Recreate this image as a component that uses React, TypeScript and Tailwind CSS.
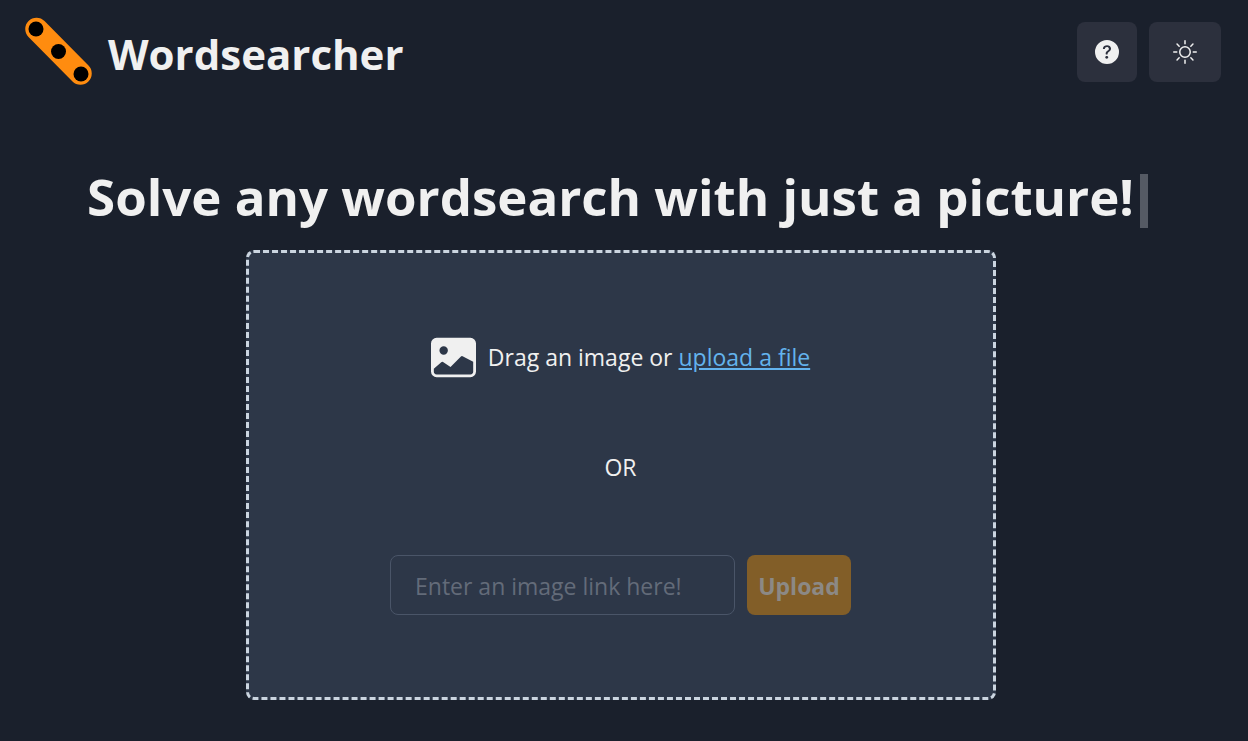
import { BsFillQuestionCircleFill, BsImageFill, BsSun } from "react-icons/bs";

function Logo() {
  return (
    <svg className="size-[72px] shrink-0" viewBox="0 0 72 72" aria-hidden="true">
      <line x1="12.5" y1="13" x2="56.5" y2="57.5" stroke="#ff8c0f" strokeWidth="22.5" strokeLinecap="round" />
      <circle cx="12" cy="13" r="7.5" />
      <circle cx="34.5" cy="35.5" r="7.5" />
      <circle cx="57" cy="58" r="7.5" />
    </svg>
  );
}

export default function App() {
  return (
    <div className="min-h-screen bg-[#1a202c] pr-[27px] pl-6 font-['Open_Sans','Noto_Sans',sans-serif] text-[#f0f0f0]">
      <header className="flex items-start justify-between pt-4">
        <div className="flex items-start gap-3">
          <Logo />
          <span className="text-[42px] leading-[76px] font-bold">Wordsearcher</span>
        </div>
        <div className="flex gap-3 pt-1.5">
          <button type="button" aria-label="Help" className="flex h-[60px] w-[60px] items-center justify-center rounded-lg bg-[#2c303d]">
            <BsFillQuestionCircleFill className="size-6" />
          </button>
          <button type="button" aria-label="Light mode" className="flex h-[60px] w-[72px] items-center justify-center rounded-lg bg-[#2c303d]">
            <BsSun className="size-6" />
          </button>
        </div>
      </header>
      <main className="flex flex-col items-center pt-[68px] pr-1 pb-10">
        <h1 className="flex items-end gap-1.5 pr-1.5 text-[51px] leading-[72px] font-bold">
          Solve any wordsearch with just a picture!
          <span className="mb-1 h-[54px] w-2 bg-[#555a64]" aria-hidden="true" />
        </h1>
        <section className="mt-[18px] flex w-full max-w-[750px] flex-col items-center gap-[70px] rounded-lg border-[3px] border-dashed border-[#cbd5e0] bg-[#2d3748] py-[82px] text-[23px] leading-[35px]">
          <p className="flex items-center gap-3">
            <BsImageFill className="size-[45px] shrink-0" />
            <span>Drag an image or <a href="#file" className="text-[#63b3ed] underline underline-offset-2">upload a file</a></span>
          </p>
          <p>OR</p>
          <form className="flex gap-3">
            <input aria-label="Image link" placeholder="Enter an image link here!" className="h-[60px] w-[345px] rounded-lg border border-[#4a5568] bg-transparent px-6 pt-0.5 placeholder:text-[#636b79]" />
            <button type="submit" disabled className="h-[60px] w-[104px] rounded-lg bg-[#825e28] pt-0.5 font-bold text-[#8c8985]">Upload</button>
          </form>
        </section>
      </main>
    </div>
  );
}
